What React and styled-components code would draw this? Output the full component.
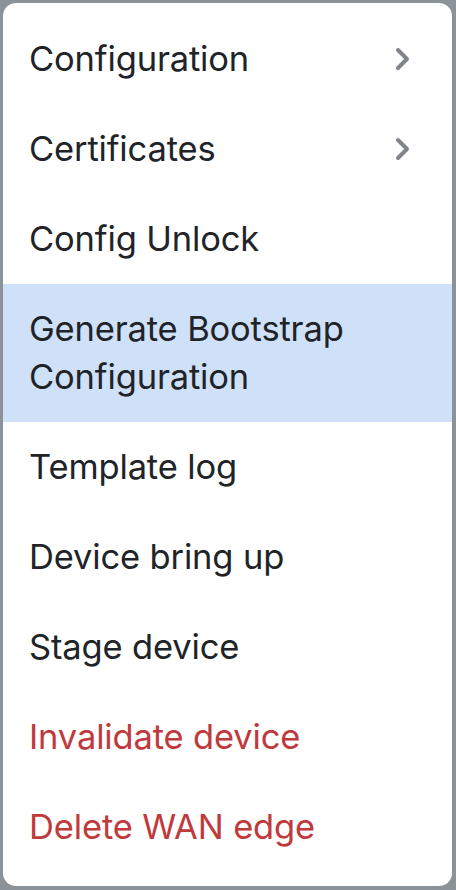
import React from "react";
import styled, { createGlobalStyle } from "styled-components";

const Global = createGlobalStyle`
  html, body { margin: 0; padding: 0; background: #8b9399; }
  body { font-family: Inter, "Noto Sans", sans-serif; -webkit-font-smoothing: antialiased; }
`;

const Page = styled.div`
  width: 456px;
  height: 890px;
  box-sizing: border-box;
  padding: 3px 4px 4px 3px;
  background: #8b9399;
`;

const Menu = styled.ul`
  list-style: none;
  margin: 0;
  height: 100%;
  box-sizing: border-box;
  padding: 11px 0 0;
  background: #ffffff;
  border-radius: 13px;
  display: flex;
  flex-direction: column;
`;

const Item = styled.li`
  display: flex;
  align-items: center;
  justify-content: space-between;
  padding: 21px 40px 21px 26px;
  font-size: 34.5px;
  line-height: 48px;
  letter-spacing: -0.15px;
  color: ${(p) => (p.$danger ? "#c0393d" : "#202327")};
  background: ${(p) => (p.$active ? "#cfe1f9" : "transparent")};
`;

const Label = styled.span`
  max-width: 350px;
`;

const Chevron = () => (
  <svg width="18" height="28" viewBox="0 0 18 28" fill="none">
    <path d="M4 5 L13 14 L4 23" stroke="#80868c" strokeWidth="4" strokeLinecap="round" strokeLinejoin="round" />
  </svg>
);

const items = [
  { label: "Configuration", sub: true },
  { label: "Certificates", sub: true },
  { label: "Config Unlock" },
  { label: "Generate Bootstrap Configuration", active: true },
  { label: "Template log" },
  { label: "Device bring up" },
  { label: "Stage device" },
  { label: "Invalidate device", danger: true },
  { label: "Delete WAN edge", danger: true },
];

export default function App() {
  return (
    <>
      <Global />
      <Page>
        <Menu>
          {items.map((it) => (
            <Item key={it.label} $active={it.active} $danger={it.danger}>
              <Label>{it.label}</Label>
              {it.sub && <Chevron />}
            </Item>
          ))}
        </Menu>
      </Page>
    </>
  );
}
